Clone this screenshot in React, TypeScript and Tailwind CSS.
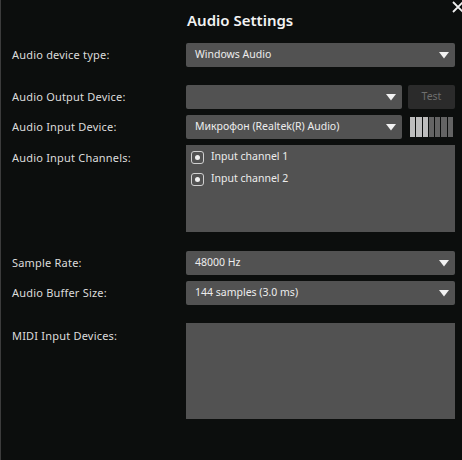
import React from 'react';

const font = { fontFamily: '"Noto Sans", "Liberation Sans", sans-serif' };

function Arrow() {
  return (
    <svg width="10" height="7" viewBox="0 0 10 7" className="shrink-0">
      <path d="M0 0 L10 0 L5 6.5 Z" fill="#f2f2f2" />
    </svg>
  );
}

function Select({ value }: { value?: string }) {
  return (
    <div className="flex-1 h-[24px] bg-[#525252] rounded-[2px] flex items-center justify-between pl-[9px] pr-[6px] text-[10.5px] text-[#ededed]">
      <span>{value}</span>
      <Arrow />
    </div>
  );
}

function Row({ label, children, className = '' }: { label: string; children: React.ReactNode; className?: string }) {
  return (
    <div className={`flex items-center ${className}`}>
      <div className="w-[174px] text-[11px] tracking-[0.2px] text-[#dcdcdc] pt-[1px]">{label}</div>
      <div className="flex-1 flex items-center gap-[6px]">{children}</div>
    </div>
  );
}

function Checkbox({ label }: { label: string }) {
  return (
    <div className="flex items-center gap-[7px] h-[22px]">
      <div className="w-[13px] h-[13px] border-[1.5px] border-[#d0d0d0] rounded-[3px] flex items-center justify-center">
        <div className="w-[5px] h-[5px] rounded-full bg-[#f0f0f0]" />
      </div>
      <span className="text-[10.5px] text-[#ececec]">{label}</span>
    </div>
  );
}

function Meter() {
  const levels = [1, 1, 1, 0, 0, 0, 0];
  return (
    <div className="w-[47px] h-[20px] flex gap-[1px] pl-[2px] pr-[2px]">
      {levels.map((on, i) => (
        <div key={i} className={`flex-1 ${on ? 'bg-[#bdbdbd]' : 'bg-[#646464]'}`} />
      ))}
    </div>
  );
}

export default function App() {
  return (
    <div className="w-[462px] h-[460px] bg-[#0c0e0d] border-l border-[#3c3c3c] relative overflow-hidden" style={font}>
      {/* close */}
      <div className="absolute top-[1px] right-[-2px] text-[#f0f0f0]">
        <svg width="12" height="12" viewBox="0 0 12 12">
          <path d="M1 1 L11 11 M11 1 L1 11" stroke="#f0f0f0" strokeWidth="1.8" />
        </svg>
      </div>

      <div className="pl-[11px] pr-[7px]">
        <div className="h-[43px] pl-[175px] pt-[8px]">
          <span className="text-[15px] font-semibold text-[#f2f2f2]">Audio Settings</span>
        </div>

        <Row label="Audio device type:">
          <Select value="Windows Audio" />
        </Row>

        <Row label="Audio Output Device:" className="mt-[18px]">
          <Select />
          <div className="w-[47px] h-[24px] bg-[#2b2b2b] rounded-[2px] flex items-center justify-center text-[10.5px] text-[#6e6e6e]">
            Test
          </div>
        </Row>

        <Row label="Audio Input Device:" className="mt-[6px]">
          <Select value="Микрофон (Realtek(R) Audio)" />
          <Meter />
        </Row>

        <div className="flex items-start mt-[6px]">
          <div className="w-[174px] text-[11px] tracking-[0.2px] text-[#dcdcdc] pt-[5px]">Audio Input Channels:</div>
          <div className="flex-1 h-[87px] bg-[#525252] pl-[5px] pt-[1px]">
            <Checkbox label="Input channel 1" />
            <Checkbox label="Input channel 2" />
          </div>
        </div>

        <Row label="Sample Rate:" className="mt-[19px]">
          <Select value="48000 Hz" />
        </Row>

        <Row label="Audio Buffer Size:" className="mt-[6px]">
          <Select value="144 samples (3.0 ms)" />
        </Row>

        <div className="flex items-start mt-[18px]">
          <div className="w-[174px] text-[11px] tracking-[0.2px] text-[#dcdcdc] pt-[5px]">MIDI Input Devices:</div>
          <div className="flex-1 h-[96px] bg-[#525252]" />
        </div>
      </div>
    </div>
  );
}
